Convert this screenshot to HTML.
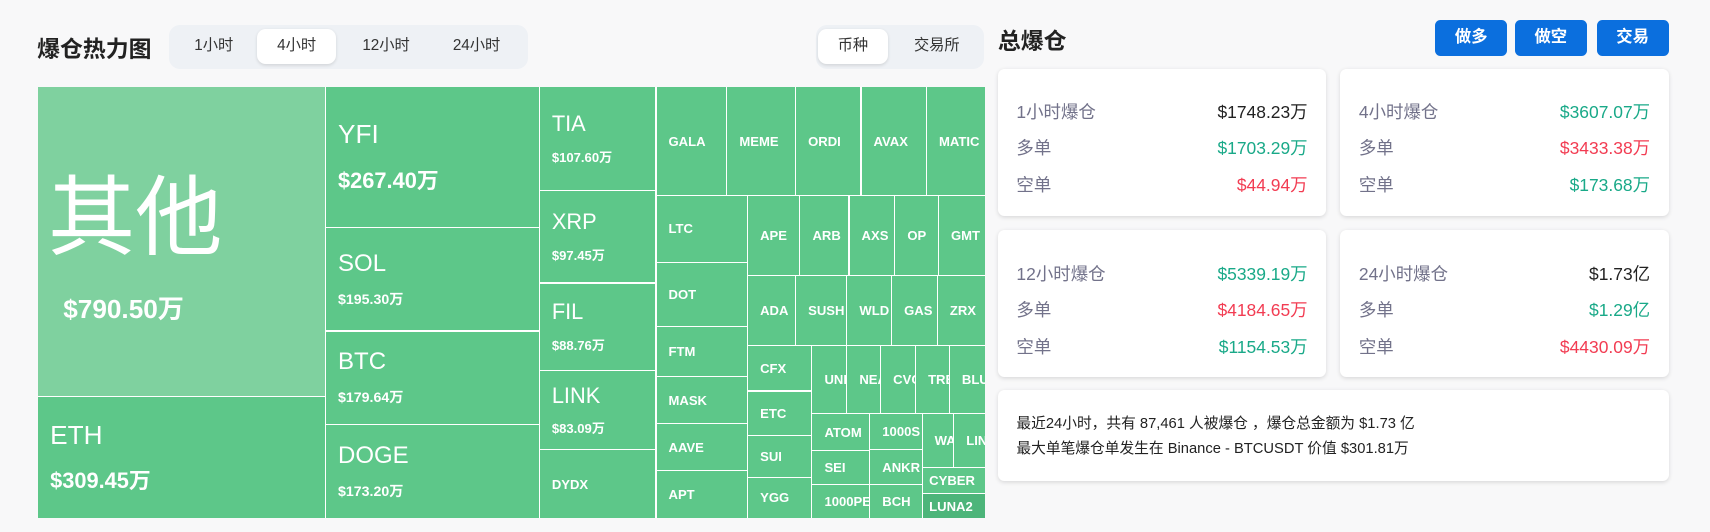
<!DOCTYPE html>
<html><head><meta charset="utf-8">
<style>
*{margin:0;padding:0;box-sizing:border-box}
html,body{width:1710px;height:532px;overflow:hidden;background:#f8f8f9}
#w{zoom:1.0906;width:1568px;height:488px;position:relative;font-family:"Liberation Sans","Noto Sans CJK SC",sans-serif;color:#222}
.a{position:absolute}
.tm{position:absolute;left:35px;top:80px;width:868px;height:395px;background:#fff}
.c{position:absolute;background:#5dc789;color:#fff;display:flex;flex-direction:column;justify-content:center;padding-left:11px;font-size:12px;font-weight:bold;overflow:hidden;white-space:nowrap;letter-spacing:0}
.tabs{background:#eef1f5;border-radius:10px;height:40px;top:23px}
.tab{position:absolute;top:4px;height:32px;line-height:32px;text-align:center;font-size:14px;color:#333}
.on{background:#fff;border-radius:8px;box-shadow:0 1px 3px rgba(0,0,0,.12)}
.btn{position:absolute;top:18px;height:33px;width:66px;background:#0b6fde;color:#fff;border-radius:5px;font-weight:bold;font-size:15px;text-align:center;line-height:33px}
.card{position:absolute;background:#fff;border-radius:6px;box-shadow:0 1px 4px rgba(0,0,0,.13)}
.row{position:absolute;left:17px;right:17px;height:20px;font-size:16px;display:flex;justify-content:space-between}
.row span:first-child{color:#72728a}
.g{color:#19a988}.r{color:#f23c52}.k{color:#222}
.t{line-height:24px;height:24px}
</style></head><body><div id="w">
<div class="a t" style="left:34px;top:33px;font-size:21px;font-weight:bold">爆仓热力图</div>
<div class="a tabs" style="left:155px;width:329px">
<div class="tab" style="left:6px;width:70px">1小时</div>
<div class="tab on" style="left:81px;width:72px">4小时</div>
<div class="tab" style="left:161px;width:76px">12小时</div>
<div class="tab" style="left:244px;width:76px">24小时</div>
</div>
<div class="a tabs" style="left:748px;width:154px">
<div class="tab on" style="left:2px;width:64px">币种</div>
<div class="tab" style="left:74px;width:74px">交易所</div>
</div>
<div class="tm">
<div class="c" style="left:0;top:0;width:263px;height:283px;background:#7fd19f;justify-content:flex-start;padding-left:9px"><div style="font-size:80px;font-weight:normal;margin-top:78px;line-height:86px">其他</div><div style="font-size:24px;margin-top:20px;margin-left:14px">$790.50万</div></div>
<div class="c" style="left:0;top:284px;width:263px;height:111px"><div style="font-size:24px;font-weight:normal">ETH</div><div style="font-size:20px;margin-top:12px">$309.45万</div></div>
<div class="c" style="left:264px;top:0;width:195px;height:128px"><div style="font-size:24px;font-weight:normal">YFI</div><div style="font-size:20px;margin-top:12px">$267.40万</div></div>
<div class="c" style="left:264px;top:129px;width:195px;height:94px"><div style="font-size:22px;font-weight:normal">SOL</div><div style="font-size:13px;margin-top:10px">$195.30万</div></div>
<div class="c" style="left:264px;top:224px;width:195px;height:85px"><div style="font-size:22px;font-weight:normal">BTC</div><div style="font-size:13px;margin-top:10px">$179.64万</div></div>
<div class="c" style="left:264px;top:310px;width:195px;height:85px"><div style="font-size:22px;font-weight:normal">DOGE</div><div style="font-size:13px;margin-top:10px">$173.20万</div></div>
<div class="c" style="left:460px;top:0;width:106px;height:94px"><div style="font-size:20px;font-weight:normal">TIA</div><div style="font-size:12px;margin-top:9px">$107.60万</div></div>
<div class="c" style="left:460px;top:95px;width:106px;height:84px"><div style="font-size:20px;font-weight:normal">XRP</div><div style="font-size:12px;margin-top:9px">$97.45万</div></div>
<div class="c" style="left:460px;top:180px;width:106px;height:79px"><div style="font-size:20px;font-weight:normal">FIL</div><div style="font-size:12px;margin-top:9px">$88.76万</div></div>
<div class="c" style="left:460px;top:260px;width:106px;height:72px"><div style="font-size:20px;font-weight:normal">LINK</div><div style="font-size:12px;margin-top:9px">$83.09万</div></div>
<div class="c" style="left:460px;top:333px;width:106px;height:62px">DYDX</div>
<div class="c" style="left:567px;top:0;width:64px;height:99px">GALA</div>
<div class="c" style="left:632px;top:0;width:62px;height:99px">MEME</div>
<div class="c" style="left:695px;top:0;width:59px;height:99px">ORDI</div>
<div class="c" style="left:755px;top:0;width:59px;height:99px">AVAX</div>
<div class="c" style="left:815px;top:0;width:53px;height:99px;padding-left:11px">MATIC</div>
<div class="c" style="left:567px;top:100px;width:83px;height:60px">LTC</div>
<div class="c" style="left:567px;top:161px;width:83px;height:58px">DOT</div>
<div class="c" style="left:567px;top:220px;width:83px;height:45px">FTM</div>
<div class="c" style="left:567px;top:266px;width:83px;height:42px">MASK</div>
<div class="c" style="left:567px;top:309px;width:83px;height:42px">AAVE</div>
<div class="c" style="left:567px;top:352px;width:83px;height:43px">APT</div>
<div class="c" style="left:651px;top:100px;width:47px;height:72px">APE</div>
<div class="c" style="left:699px;top:100px;width:44px;height:72px">ARB</div>
<div class="c" style="left:744px;top:100px;width:41px;height:72px">AXS</div>
<div class="c" style="left:786px;top:100px;width:39px;height:72px">OP</div>
<div class="c" style="left:826px;top:100px;width:42px;height:72px">GMT</div>
<div class="c" style="left:651px;top:173px;width:43px;height:63px">ADA</div>
<div class="c" style="left:695px;top:173px;width:46px;height:63px">SUSH</div>
<div class="c" style="left:742px;top:173px;width:40px;height:63px">WLD</div>
<div class="c" style="left:783px;top:173px;width:41px;height:63px">GAS</div>
<div class="c" style="left:825px;top:173px;width:43px;height:63px">ZRX</div>
<div class="c" style="left:651px;top:237px;width:58px;height:41px">CFX</div>
<div class="c" style="left:651px;top:279px;width:58px;height:40px">ETC</div>
<div class="c" style="left:651px;top:320px;width:58px;height:37px">SUI</div>
<div class="c" style="left:651px;top:358px;width:58px;height:37px">YGG</div>
<div class="c" style="left:710px;top:237px;width:31px;height:62px">UNI</div>
<div class="c" style="left:742px;top:237px;width:30px;height:62px">NEA</div>
<div class="c" style="left:773px;top:237px;width:31px;height:62px">CVC</div>
<div class="c" style="left:805px;top:237px;width:30px;height:62px">TRB</div>
<div class="c" style="left:836px;top:237px;width:32px;height:62px">BLU</div>
<div class="c" style="left:710px;top:300px;width:52px;height:33px">ATOM</div>
<div class="c" style="left:710px;top:334px;width:52px;height:30px">SEI</div>
<div class="c" style="left:710px;top:365px;width:52px;height:30px">1000PE</div>
<div class="c" style="left:763px;top:300px;width:47px;height:32px">1000S</div>
<div class="c" style="left:763px;top:333px;width:47px;height:31px">ANKR</div>
<div class="c" style="left:763px;top:365px;width:47px;height:30px">BCH</div>
<div class="c" style="left:811px;top:300px;width:28px;height:48px">WA</div>
<div class="c" style="left:840px;top:300px;width:28px;height:48px">LIN</div>
<div class="c" style="left:811px;top:349px;width:57px;height:23px;padding-left:6px">CYBER</div>
<div class="c" style="left:811px;top:373px;width:57px;height:22px;padding-left:6px;background:#4db57a">LUNA2</div>
</div>
<div class="a t" style="left:915px;top:26px;font-size:21px;font-weight:bold">总爆仓</div>
<div class="btn" style="left:1316px">做多</div>
<div class="btn" style="left:1389px">做空</div>
<div class="btn" style="left:1464px">交易</div>
<div class="card" style="left:915px;top:63px;width:301px;height:135px">
<div class="row" style="top:28px"><span>1小时爆仓</span><span class="k">$1748.23万</span></div>
<div class="row" style="top:61px"><span>多单</span><span class="g">$1703.29万</span></div>
<div class="row" style="top:95px"><span>空单</span><span class="r">$44.94万</span></div>
</div>
<div class="card" style="left:1229px;top:63px;width:301px;height:135px">
<div class="row" style="top:28px"><span>4小时爆仓</span><span class="g">$3607.07万</span></div>
<div class="row" style="top:61px"><span>多单</span><span class="r">$3433.38万</span></div>
<div class="row" style="top:95px"><span>空单</span><span class="g">$173.68万</span></div>
</div>
<div class="card" style="left:915px;top:211px;width:301px;height:135px">
<div class="row" style="top:28px"><span>12小时爆仓</span><span class="g">$5339.19万</span></div>
<div class="row" style="top:61px"><span>多单</span><span class="r">$4184.65万</span></div>
<div class="row" style="top:95px"><span>空单</span><span class="g">$1154.53万</span></div>
</div>
<div class="card" style="left:1229px;top:211px;width:301px;height:135px">
<div class="row" style="top:28px"><span>24小时爆仓</span><span class="k">$1.73亿</span></div>
<div class="row" style="top:61px"><span>多单</span><span class="g">$1.29亿</span></div>
<div class="row" style="top:95px"><span>空单</span><span class="r">$4430.09万</span></div>
</div>
<div class="card" style="left:915px;top:358px;width:615px;height:83px;padding:20px 17px;font-size:13.5px;line-height:23px;color:#222">
最近24小时，共有 87,461 人被爆仓 ，爆仓总金额为 $1.73 亿<br>最大单笔爆仓单发生在 Binance - BTCUSDT 价值 $301.81万
</div>
</div></body></html>
